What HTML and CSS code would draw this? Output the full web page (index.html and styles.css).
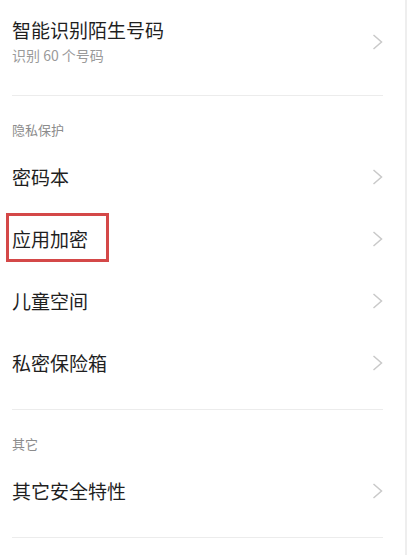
FILE: index.html
```html
<!DOCTYPE html>
<html lang="zh-CN">
<head>
<meta charset="utf-8">
<title>安全设置</title>
<link rel="stylesheet" href="styles.css">
</head>
<body>
<div class="page">
  <div class="group group-top">
    <div class="row row-top">
      <div class="texts">
        <div class="title">智能识别陌生号码</div>
        <div class="sub">识别 60 个号码</div>
      </div>
      <svg class="chev" viewBox="0 0 11 16" width="11" height="16"><polyline points="1.5,1 9.5,8 1.5,15" fill="none" stroke="#c9c9c9" stroke-width="1.5"/></svg>
    </div>
  </div>
  <div class="group">
    <div class="header">隐私保护</div>
    <div class="row"><span class="title">密码本</span><svg class="chev" viewBox="0 0 11 16" width="11" height="16"><polyline points="1.5,1 9.5,8 1.5,15" fill="none" stroke="#c9c9c9" stroke-width="1.5"/></svg></div>
    <div class="row marked"><span class="title">应用加密</span><span class="mark"></span><svg class="chev" viewBox="0 0 11 16" width="11" height="16"><polyline points="1.5,1 9.5,8 1.5,15" fill="none" stroke="#c9c9c9" stroke-width="1.5"/></svg></div>
    <div class="row"><span class="title">儿童空间</span><svg class="chev" viewBox="0 0 11 16" width="11" height="16"><polyline points="1.5,1 9.5,8 1.5,15" fill="none" stroke="#c9c9c9" stroke-width="1.5"/></svg></div>
    <div class="row"><span class="title">私密保险箱</span><svg class="chev" viewBox="0 0 11 16" width="11" height="16"><polyline points="1.5,1 9.5,8 1.5,15" fill="none" stroke="#c9c9c9" stroke-width="1.5"/></svg></div>
  </div>
  <div class="group">
    <div class="header">其它</div>
    <div class="row"><span class="title">其它安全特性</span><svg class="chev" viewBox="0 0 11 16" width="11" height="16"><polyline points="1.5,1 9.5,8 1.5,15" fill="none" stroke="#c9c9c9" stroke-width="1.5"/></svg></div>
  </div>
</div>
</body>
</html>
```

FILE: styles.css
```css
html, body {
  margin: 0;
  padding: 0;
  background: #ffffff;
}
body {
  font-family: "Noto Sans CJK SC", "Noto Sans", sans-serif;
  color: #1f1f1f;
}
.page {
  width: 405px;
  height: 555px;
  border-right: 2px solid #eeeeee;
  box-sizing: content-box;
  overflow: hidden;
}
.group {
  margin-left: 12px;
  width: 371px;
  padding-bottom: 15px;
  border-bottom: 1px solid #ececec;
}
.group-top {
  padding-top: 18px;
  padding-bottom: 30px;
}
.row {
  position: relative;
  height: 62px;
  display: flex;
  align-items: center;
  justify-content: space-between;
}
.row-top {
  height: auto;
}
.texts {
  display: flex;
  flex-direction: column;
  gap: 4px;
}
.title {
  font-size: 19px;
  line-height: 24px;
  color: #1f1f1f;
}
.sub {
  font-size: 14px;
  line-height: 19px;
  color: #9a9a9a;
}
.header {
  font-size: 13px;
  line-height: 18px;
  color: #8c8c8c;
  padding-top: 25px;
  padding-bottom: 7px;
}
.chev {
  display: block;
  flex: none;
}
.mark {
  position: absolute;
  left: -6px;
  top: 5px;
  width: 97px;
  height: 43px;
  border: 3px solid #d44848;
}
```
